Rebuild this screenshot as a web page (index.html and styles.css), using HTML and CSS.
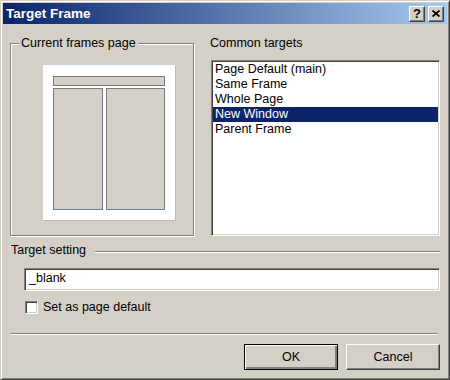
FILE: index.html
```html
<!DOCTYPE html>
<html lang="en">
<head>
  <meta charset="UTF-8">
  <title>Target Frame</title>
  <link rel="stylesheet" href="styles.css">
</head>
<body>
  <div class="window">
    <div class="titlebar">
      <span class="title">Target Frame</span>
      <div class="caption-buttons">
        <span class="cap-btn help">?</span>
        <span class="cap-btn close">
          <svg width="8" height="7" viewBox="0 0 8 7"><path d="M0.5 0.5 L7.5 6.5 M7.5 0.5 L0.5 6.5" stroke="#000" stroke-width="1.8" fill="none"/></svg>
        </span>
      </div>
    </div>

    <div class="content">
      <div class="top">
        <fieldset class="group">
          <legend>Current frames page</legend>
          <div class="preview">
            <div class="frame frame-top"></div>
            <div class="frame-row">
              <div class="frame"></div>
              <div class="frame"></div>
            </div>
          </div>
        </fieldset>

        <div class="targets">
          <div class="label">Common targets</div>
          <ul class="list">
            <li>Page Default (main)</li>
            <li>Same Frame</li>
            <li>Whole Page</li>
            <li class="selected">New Window</li>
            <li>Parent Frame</li>
          </ul>
        </div>
      </div>

      <div class="section-title">
        <span>Target setting</span>
        <span class="rule"></span>
      </div>
      <div class="input">_blank</div>
      <label class="check"><span class="box"></span>Set as page default</label>

      <div class="sep"></div>

      <div class="buttons">
        <span class="btn default">OK</span>
        <span class="btn">Cancel</span>
      </div>
    </div>
  </div>
</body>
</html>
```

FILE: styles.css
```css
* { box-sizing: border-box; }
body { margin: 0; background: #d4d0c8; font-family: "Liberation Sans", Arial, sans-serif; font-size: 12.5px; color: #000; }

.window {
  width: 450px; height: 380px; padding: 2px;
  background: #d4d0c8;
  border: 1px solid; border-color: #d4d0c8 #404040 #404040 #d4d0c8;
  box-shadow: inset 1px 1px #fff, inset -1px -1px #808080;
  display: flex; flex-direction: column;
}

/* title bar */
.titlebar {
  height: 21px; display: flex; align-items: center; justify-content: space-between;
  padding: 0 3px 0 3px;
  background: linear-gradient(to right, #0a246a, #a6caf0);
}
.title { color: #fff; font-weight: bold; font-size: 13.5px; }
.caption-buttons { display: flex; gap: 3px; }
.cap-btn {
  width: 16px; height: 16px; display: flex; align-items: center; justify-content: center;
  background: #d4d0c8; border: 1px solid; border-color: #fff #404040 #404040 #fff;
  box-shadow: inset -1px -1px #808080;
}
.help { font-weight: bold; font-size: 13px; line-height: 1; }

/* dialog body */
.content { flex: 1; padding: 12px 7px 0 7px; }
.top { display: flex; gap: 16px; height: 200px; }

.group {
  margin: 0; padding: 0; width: 184px; height: 200px; min-width: 0;
  border: 1px solid #808080; box-shadow: inset 1px 1px #fff, 1px 1px #fff;
}
.group legend { margin-left: 8px; padding: 0 2px; line-height: 15px; background: #d4d0c8; }

.preview {
  width: 132px; height: 155px; margin: 14px 0 0 32px;
  padding: 11px 10px 10px; background: #fff;
  box-shadow: 1px 1px #bcb8b0;
  display: flex; flex-direction: column; gap: 2px;
}
.frame { background: #d4d0c8; border: 1px solid #7c7c7c; }
.frame-top { height: 10px; }
.frame-row { flex: 1; display: grid; grid-template-columns: 50px 1fr; gap: 3px; }

.targets { flex: 1; display: flex; flex-direction: column; }
.label { line-height: 15px; }
.list {
  margin: 9px 0 0 1px; padding: 1px 0 0; list-style: none; height: 176px;
  background: #fff; border: 1px solid; border-color: #808080 #fff #fff #808080;
  box-shadow: inset 1px 1px #404040, inset -1px -1px #d4d0c8;
}
.list li { line-height: 15px; padding-left: 2px; margin: 0 1px; }
.list li.selected { background: #0a246a; color: #fff; }

.section-title { display: flex; align-items: center; gap: 9px; margin: 7px 0 0 1px; line-height: 15px; }
.rule { flex: 1; border-top: 1px solid #808080; border-bottom: 1px solid #fff; margin-top: 3px; }

.input {
  margin: 10px 0 0 14px; height: 23px; padding: 0 4px; line-height: 19px;
  background: #fff; border: 1px solid; border-color: #808080 #fff #fff #808080;
  box-shadow: inset 1px 1px #404040, inset -1px -1px #d4d0c8;
}

.check { display: flex; align-items: center; gap: 5px; margin: 9px 0 0 15px; line-height: 15px; }
.box {
  width: 13px; height: 13px; background: #fff;
  border: 1px solid; border-color: #808080 #fff #fff #808080;
  box-shadow: inset 1px 1px #404040, inset -1px -1px #d4d0c8;
}

.sep { margin: 18px 2px 0 0; border-top: 1px solid #808080; border-bottom: 1px solid #fff; }

.buttons { display: flex; justify-content: flex-end; gap: 8px; margin-top: 9px; }
.btn {
  width: 94px; height: 26px; display: flex; align-items: center; justify-content: center;
  background: #d4d0c8; border: 1px solid; border-color: #fff #404040 #404040 #fff;
  box-shadow: inset -1px -1px #808080;
}
.btn.default { border-color: #000; box-shadow: inset 1px 1px #fff, inset -2px -2px #808080; }
```
